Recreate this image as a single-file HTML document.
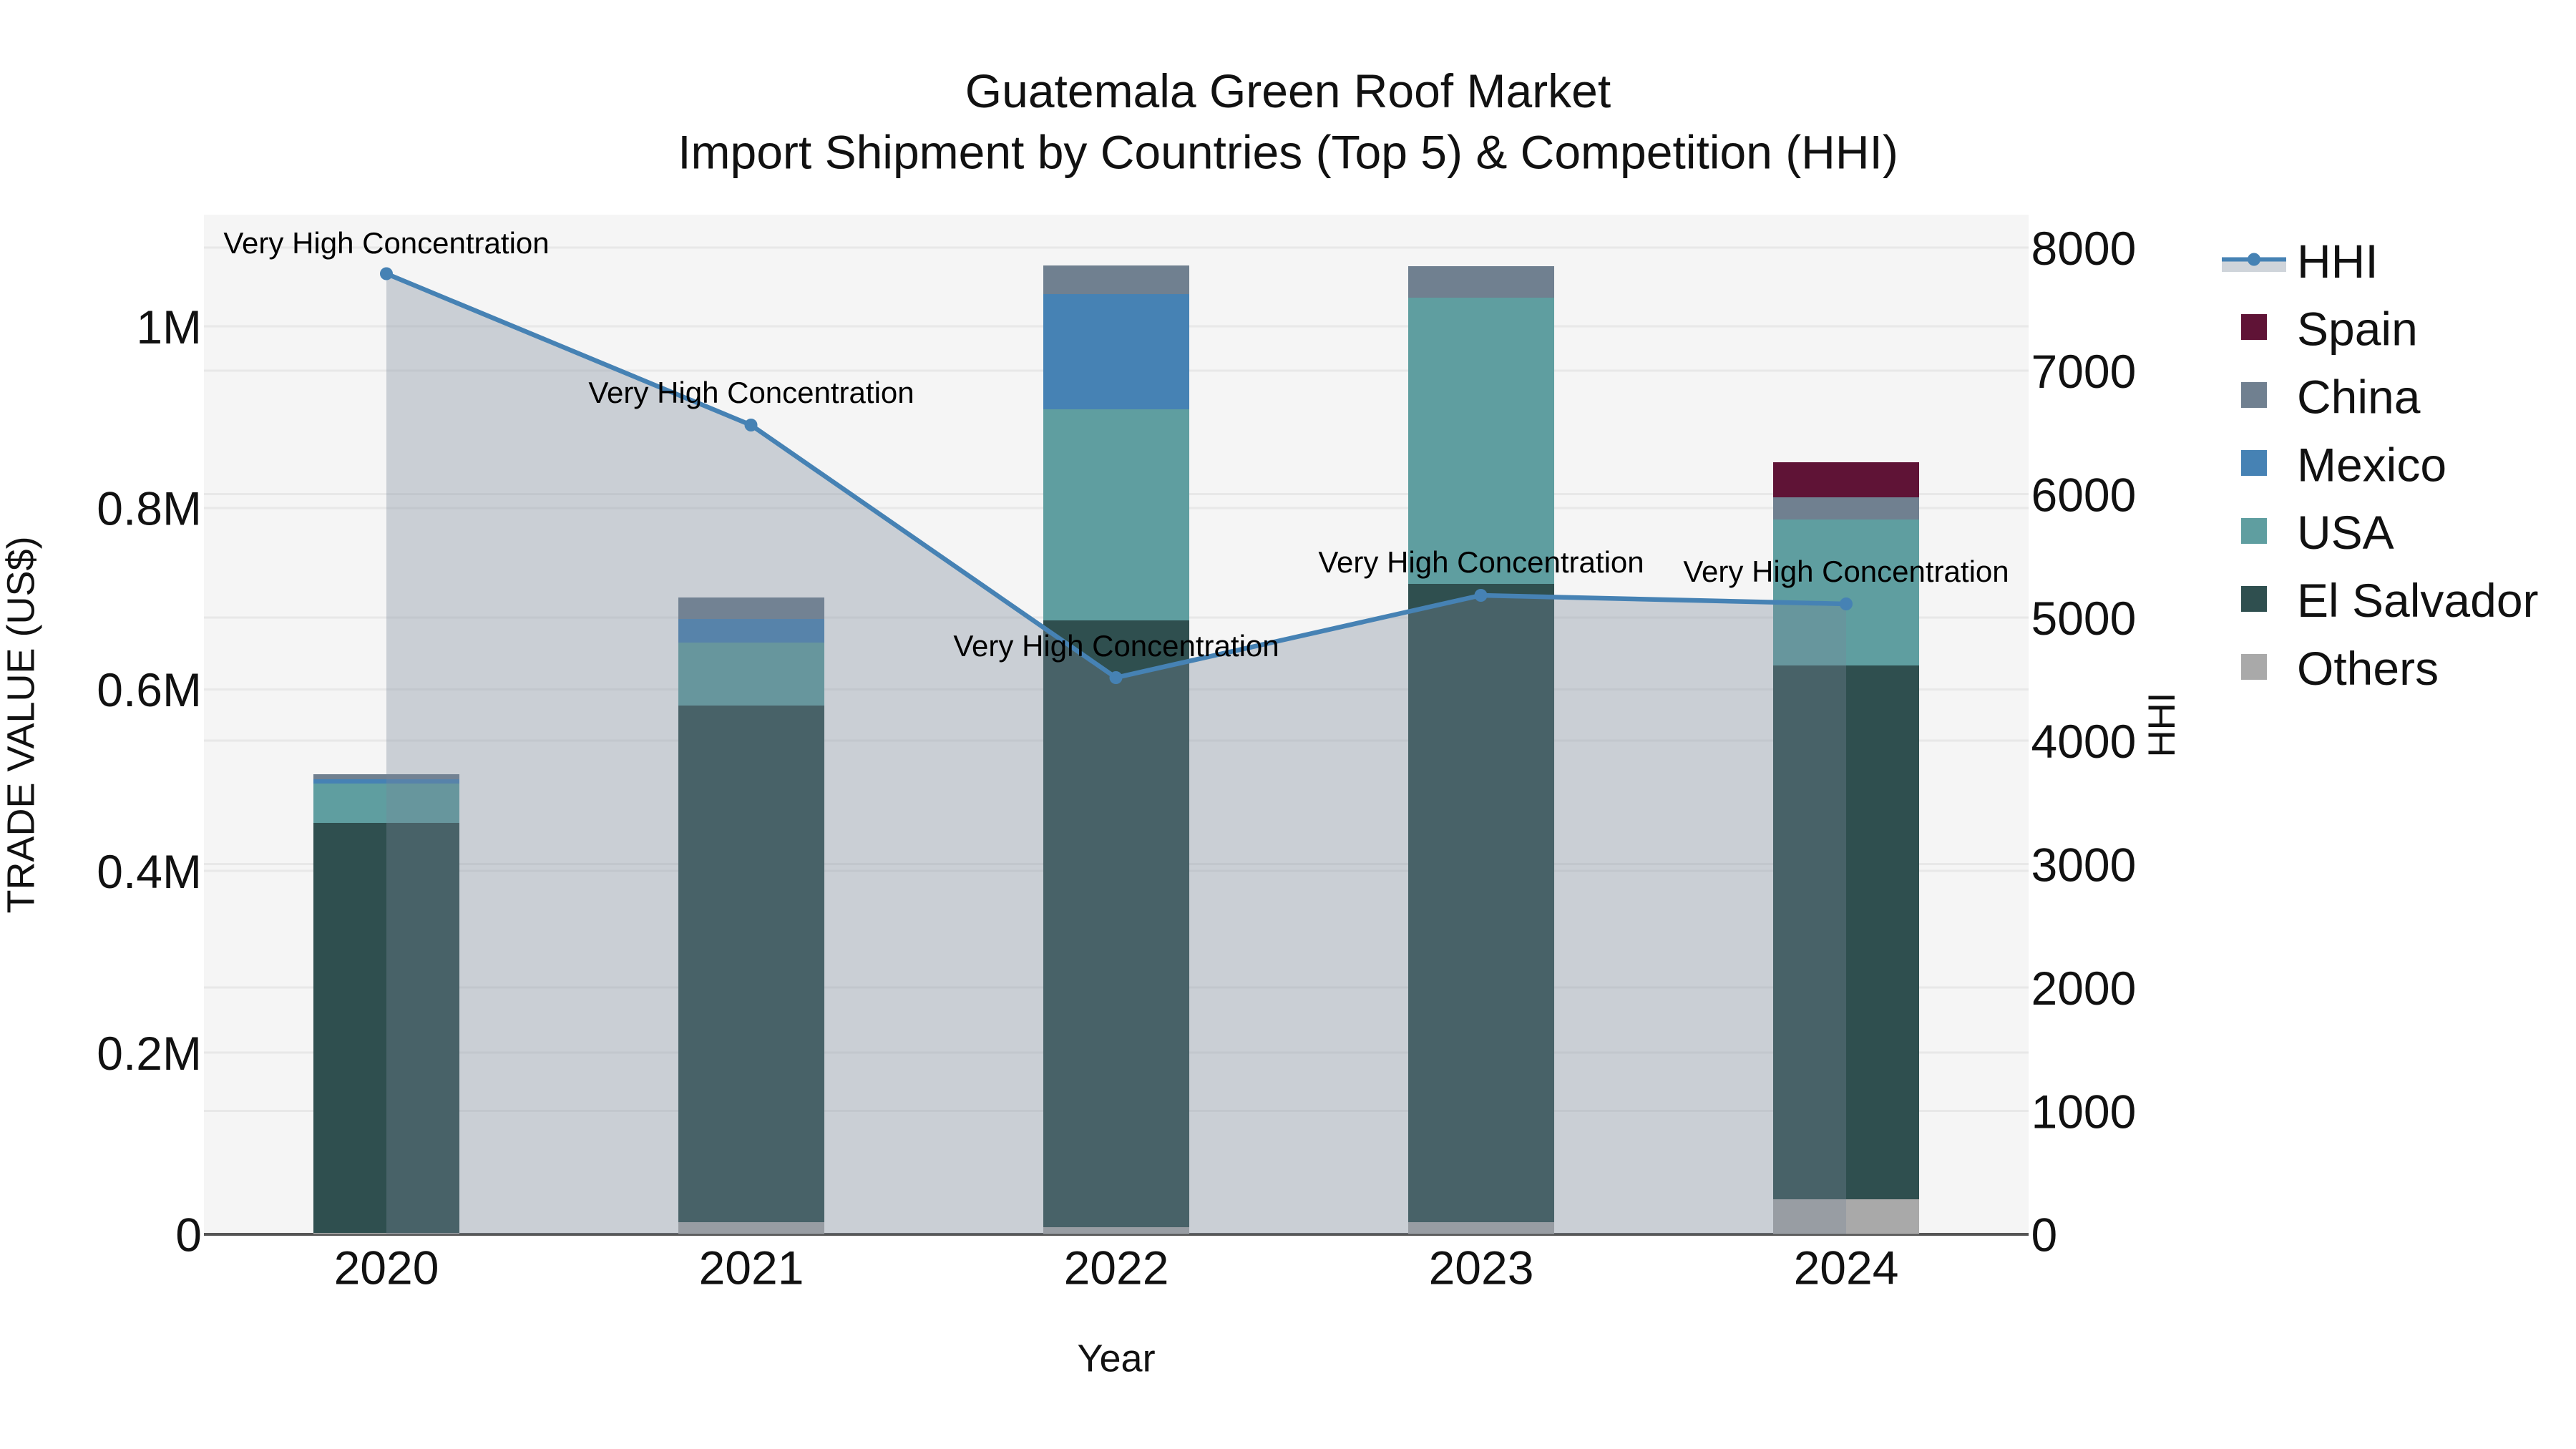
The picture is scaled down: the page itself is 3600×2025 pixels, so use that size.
<!DOCTYPE html>
<html>
<head>
<meta charset="utf-8">
<style>
html,body{margin:0;padding:0;background:#fff;}
svg{display:block;}
text{font-family:"Liberation Sans",sans-serif;}
</style>
</head>
<body>
<svg width="3600" height="2025" viewBox="0 0 3600 2025" xmlns="http://www.w3.org/2000/svg">
<rect width="3600" height="2025" fill="#fff"/>
<rect x="285" y="300" width="2550" height="1425" fill="#f5f5f5"/>
<!-- grid -->
<g stroke="#e8e8e8" stroke-width="3">
<line x1="285" x2="2835" y1="346" y2="346"/>
<line x1="285" x2="2835" y1="518" y2="518"/>
<line x1="285" x2="2835" y1="690.5" y2="690.5"/>
<line x1="285" x2="2835" y1="863" y2="863"/>
<line x1="285" x2="2835" y1="1035" y2="1035"/>
<line x1="285" x2="2835" y1="1207.5" y2="1207.5"/>
<line x1="285" x2="2835" y1="1380" y2="1380"/>
<line x1="285" x2="2835" y1="1552.5" y2="1552.5"/>
<line x1="285" x2="2835" y1="456" y2="456"/>
<line x1="285" x2="2835" y1="710" y2="710"/>
<line x1="285" x2="2835" y1="963.5" y2="963.5"/>
<line x1="285" x2="2835" y1="1217" y2="1217"/>
<line x1="285" x2="2835" y1="1471" y2="1471"/>
</g>
<!-- axis -->
<rect x="285" y="1723" width="2550" height="4" fill="#555"/>
<!-- bars -->
<g>
<!-- 2020 -->
<rect x="438" y="1082" width="204" height="7" fill="#708090"/>
<rect x="438" y="1089" width="204" height="6" fill="#4682b4"/>
<rect x="438" y="1095" width="204" height="55" fill="#5f9ea0"/>
<rect x="438" y="1150" width="204" height="573" fill="#2f4f4f"/>
<rect x="438" y="1723" width="204" height="1.5" fill="#a9a9a9"/>
<!-- 2021 -->
<rect x="948" y="835" width="204" height="30" fill="#708090"/>
<rect x="948" y="865" width="204" height="33" fill="#4682b4"/>
<rect x="948" y="898" width="204" height="88" fill="#5f9ea0"/>
<rect x="948" y="986" width="204" height="722" fill="#2f4f4f"/>
<rect x="948" y="1708" width="204" height="16.5" fill="#a9a9a9"/>
<!-- 2022 -->
<rect x="1458" y="371" width="204" height="40" fill="#708090"/>
<rect x="1458" y="411" width="204" height="161" fill="#4682b4"/>
<rect x="1458" y="572" width="204" height="295" fill="#5f9ea0"/>
<rect x="1458" y="867" width="204" height="848" fill="#2f4f4f"/>
<rect x="1458" y="1715" width="204" height="9.5" fill="#a9a9a9"/>
<!-- 2023 -->
<rect x="1968" y="372" width="204" height="44" fill="#708090"/>
<rect x="1968" y="416" width="204" height="400" fill="#5f9ea0"/>
<rect x="1968" y="816" width="204" height="892" fill="#2f4f4f"/>
<rect x="1968" y="1708" width="204" height="16.5" fill="#a9a9a9"/>
<!-- 2024 -->
<rect x="2478" y="646" width="204" height="49" fill="#5f1336"/>
<rect x="2478" y="695" width="204" height="31" fill="#708090"/>
<rect x="2478" y="726" width="204" height="204" fill="#5f9ea0"/>
<rect x="2478" y="930" width="204" height="746" fill="#2f4f4f"/>
<rect x="2478" y="1676" width="204" height="48.5" fill="#a9a9a9"/>
</g>
<!-- HHI area & line -->
<path d="M540 382.5L1049.5 594L1559.5 947L2069.5 832L2580 844L2580 1724.5L540 1724.5Z" fill="rgba(120,134,152,0.34)"/>
<path d="M540 382.5L1049.5 594L1559.5 947L2069.5 832L2580 844" fill="none" stroke="#4682b4" stroke-width="6.5" stroke-linejoin="round"/>
<g fill="#4682b4">
<circle cx="540" cy="382.5" r="9"/>
<circle cx="1049.5" cy="594" r="9"/>
<circle cx="1559.5" cy="947" r="9"/>
<circle cx="2069.5" cy="832" r="9"/>
<circle cx="2580" cy="844" r="9"/>
</g>
<!-- annotations -->
<g font-size="42" fill="#000" text-anchor="middle">
<text x="540" y="354">Very High Concentration</text>
<text x="1050" y="563">Very High Concentration</text>
<text x="1560" y="917">Very High Concentration</text>
<text x="2070" y="800">Very High Concentration</text>
<text x="2580" y="813">Very High Concentration</text>
</g>
<!-- title -->
<g font-size="66" fill="#111" text-anchor="middle">
<text x="1800" y="150">Guatemala Green Roof Market</text>
<text x="1800" y="235.5">Import Shipment by Countries (Top 5) &amp; Competition (HHI)</text>
</g>
<!-- left ticks -->
<g font-size="66" fill="#111" text-anchor="end">
<text x="282" y="480">1M</text>
<text x="282" y="733.5">0.8M</text>
<text x="282" y="987">0.6M</text>
<text x="282" y="1241">0.4M</text>
<text x="282" y="1495">0.2M</text>
<text x="282" y="1748.5">0</text>
</g>
<!-- right ticks -->
<g font-size="66" fill="#111" text-anchor="start">
<text x="2838.5" y="370">8000</text>
<text x="2838.5" y="542">7000</text>
<text x="2838.5" y="714.5">6000</text>
<text x="2838.5" y="887">5000</text>
<text x="2838.5" y="1059">4000</text>
<text x="2838.5" y="1231.5">3000</text>
<text x="2838.5" y="1404">2000</text>
<text x="2838.5" y="1576.5">1000</text>
<text x="2838.5" y="1748.5">0</text>
</g>
<!-- x ticks -->
<g font-size="66" fill="#111" text-anchor="middle">
<text x="540" y="1794.5">2020</text>
<text x="1050" y="1794.5">2021</text>
<text x="1560" y="1794.5">2022</text>
<text x="2070" y="1794.5">2023</text>
<text x="2580" y="1794.5">2024</text>
</g>
<!-- axis titles -->
<g font-size="54" fill="#111" text-anchor="middle">
<text x="1560" y="1916.5">Year</text>
<text transform="translate(47.5,1013) rotate(-90)">TRADE VALUE (US$)</text>
<text font-size="52.8" transform="translate(3039,1013) rotate(-90)">HHI</text>
</g>
<!-- legend -->
<rect x="3105" y="362" width="90" height="18" fill="#cfd4da"/>
<rect x="3105" y="359.5" width="90" height="6" fill="#4682b4"/>
<circle cx="3150" cy="362.5" r="9" fill="#4682b4"/>
<rect x="3132" y="439" width="36" height="36" fill="#5f1336"/>
<rect x="3132" y="534" width="36" height="36" fill="#708090"/>
<rect x="3132" y="629" width="36" height="36" fill="#4682b4"/>
<rect x="3132" y="724" width="36" height="36" fill="#5f9ea0"/>
<rect x="3132" y="819" width="36" height="36" fill="#2f4f4f"/>
<rect x="3132" y="914" width="36" height="36" fill="#a9a9a9"/>
<g font-size="66" fill="#111">
<text x="3210" y="388">HHI</text>
<text x="3210" y="482.5">Spain</text>
<text x="3210" y="577.5">China</text>
<text x="3210" y="672.5">Mexico</text>
<text x="3210" y="767">USA</text>
<text x="3210" y="862">El Salvador</text>
<text x="3210" y="957">Others</text>
</g>
</svg>
</body>
</html>
